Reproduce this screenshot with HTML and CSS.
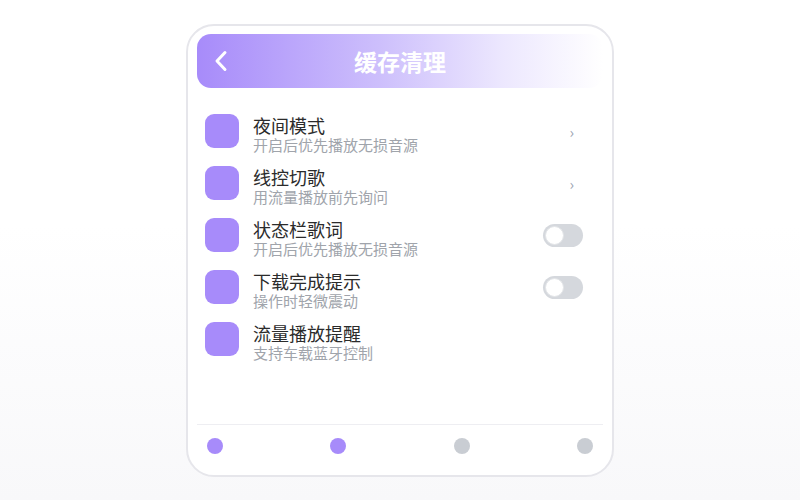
FILE: index.html
```html
<!DOCTYPE html>
<html lang="zh-CN">
<head>
<meta charset="utf-8">
<title>缓存清理</title>
<link rel="stylesheet" href="styles.css">
</head>
<body>
<div class="card">
  <header class="topbar">
    <span class="back">
      <svg width="16" height="22" viewBox="0 0 16 22"><polyline points="12,2.5 4,11 12,19.5" fill="none" stroke="#fff" stroke-width="3" stroke-linecap="round" stroke-linejoin="round"/></svg>
    </span>
    <h1 class="title">缓存清理</h1>
    <span></span>
  </header>
  <ul class="list">
    <li class="row">
      <span class="icon"></span>
      <div class="text"><div class="name">夜间模式</div><div class="desc">开启后优先播放无损音源</div></div>
      <span class="chev">›</span>
    </li>
    <li class="row">
      <span class="icon"></span>
      <div class="text"><div class="name">线控切歌</div><div class="desc">用流量播放前先询问</div></div>
      <span class="chev">›</span>
    </li>
    <li class="row">
      <span class="icon"></span>
      <div class="text"><div class="name">状态栏歌词</div><div class="desc">开启后优先播放无损音源</div></div>
      <span class="toggle"><span class="knob"></span></span>
    </li>
    <li class="row">
      <span class="icon"></span>
      <div class="text"><div class="name">下载完成提示</div><div class="desc">操作时轻微震动</div></div>
      <span class="toggle"><span class="knob"></span></span>
    </li>
    <li class="row">
      <span class="icon"></span>
      <div class="text"><div class="name">流量播放提醒</div><div class="desc">支持车载蓝牙控制</div></div>
    </li>
  </ul>
  <nav class="tabs">
    <span class="dot on"></span>
    <span class="dot on"></span>
    <span class="dot"></span>
    <span class="dot"></span>
  </nav>
</div>
</body>
</html>
```
FILE: styles.css
```css
* { box-sizing: border-box; }
html, body { height: 100%; }
body {
  margin: 0;
  font-family: "Noto Sans CJK SC", "Noto Sans", sans-serif;
  background: linear-gradient(180deg, #ffffff 0%, #ffffff 45%, #f8f8fa 100%);
  padding-top: 24px;
}
.card {
  width: 428px;
  height: 453px;
  margin: 0 auto;
  background: #fff;
  border: 2px solid #e6e6eb;
  border-radius: 28px;
  padding: 8px 9px;
  display: flex;
  flex-direction: column;
}
.topbar {
  height: 54px;
  border-radius: 14px;
  background: linear-gradient(90deg, #a78bfa 0%, #cdbffc 45%, #ece7fe 75%, #ffffff 100%);
  display: grid;
  grid-template-columns: 1fr auto 1fr;
  align-items: center;
}
.back {
  display: flex;
  align-items: center;
  padding-left: 16px;
}
.title {
  margin: 0;
  font-size: 23px;
  font-weight: 700;
  color: #fff;
  line-height: 1;
}
.list {
  list-style: none;
  margin: 0;
  padding: 17px 20px 0 8px;
  flex: 1;
}
.row {
  height: 52px;
  display: flex;
  align-items: center;
}
.icon {
  width: 34px;
  height: 34px;
  border-radius: 9px;
  background: #a78bfa;
  flex: none;
}
.text {
  flex: 1;
  margin-left: 14px;
  padding-top: 6px;
}
.name {
  font-size: 18px;
  line-height: 21px;
  color: #2b2b2b;
}
.desc {
  font-size: 15px;
  line-height: 18px;
  color: #a0a4ab;
}
.chev {
  font-size: 15px;
  color: #9ca3af;
  margin-right: 9px;
  line-height: 1;
}
.toggle {
  width: 40px;
  height: 23px;
  border-radius: 12px;
  background: #d5d8dd;
  position: relative;
  flex: none;
}
.knob {
  position: absolute;
  left: 2px;
  top: 2px;
  width: 19px;
  height: 19px;
  border-radius: 50%;
  background: #fff;
  border: 1px solid #e3e5e8;
}
.tabs {
  border-top: 1px solid #eeeef2;
  height: 43px;
  padding: 0 10px;
  display: flex;
  justify-content: space-between;
  align-items: center;
}
.dot {
  width: 16px;
  height: 16px;
  border-radius: 50%;
  background: #c9cdd3;
}
.dot.on { background: #a78bfa; }
```
